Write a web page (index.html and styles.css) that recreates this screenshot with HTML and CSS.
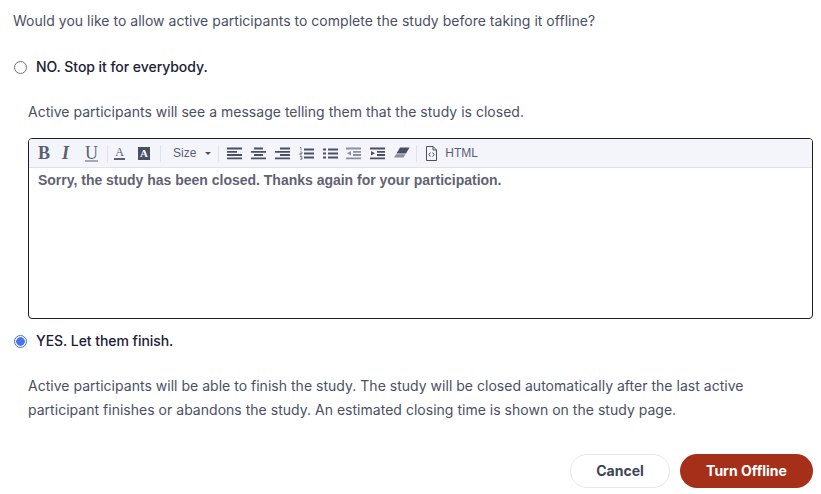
FILE: index.html
```html
<!DOCTYPE html>
<html lang="en">
<head>
    <meta charset="UTF-8">
    <title>Turn study offline</title>
    <link rel="stylesheet" href="styles.css">
</head>
<body>
    <p class="question">Would you like to allow active participants to complete the study before taking it offline?</p>

    <label class="option option-no">
        <input type="radio" name="finish">
        <span>NO. Stop it for everybody.</span>
    </label>
    <p class="note note-no">Active participants will see a message telling them that the study is closed.</p>

    <div class="editor">
        <div class="toolbar">
            <span class="tool tool-b">B</span>
            <span class="tool tool-i">I</span>
            <span class="tool tool-u">U</span>
            <span class="sep sep-a"></span>
            <span class="tool tool-color">A</span>
            <span class="tool tool-bg">A</span>
            <span class="sep sep-b"></span>
            <span class="tool tool-size">Size <i class="caret"></i></span>
            <span class="sep sep-c"></span>
            <svg class="icon" width="16" height="13" viewBox="0 0 16 13"><path d="M0 1.500h15M0 4.800h10M0 8h15M0 11.300h15" /></svg>
            <svg class="icon" width="16" height="13" viewBox="0 0 16 13"><path d="M3 1.500h9M0 4.800h15M3 8h9M0 11.300h15" /></svg>
            <svg class="icon" width="16" height="13" viewBox="0 0 16 13"><path d="M5 1.500h10M0 4.800h15M5 8h10M0 11.300h15" /></svg>
            <svg class="icon" width="16" height="13" viewBox="0 0 16 13"><path d="M5 2.500h10M5 6.500h10M5 10.500h10" /><path class="fine" d="M1 .5h1v3M1 5h2v1.500H1V8h2M1 9.500h2v1.500H1.500M3 11v1.300H1" /></svg>
            <svg class="icon icon-list" width="15" height="13" viewBox="0 0 15 13"><path d="M5 2.500h10M5 6.500h10M5 10.500h10M0 2.500h3M0 6.500h3M0 10.500h3" /></svg>
            <svg class="icon icon-pale" width="16" height="13" viewBox="0 0 16 13"><path d="M0 1.500h15M7 4.800h8M7 8h8M0 11.300h15" /><path class="solid" d="M5 4v4.500L1 6.200z" /></svg>
            <svg class="icon" width="16" height="13" viewBox="0 0 16 13"><path d="M0 1.500h15M7 4.800h8M7 8h8M0 11.300h15" /><path class="solid" d="M1 4v4.500l4-2.300z" /></svg>
            <svg class="icon icon-eraser" width="16" height="12" viewBox="0 0 16 12"><path class="solid" d="M6 .5h9.500L12 6.500H2.500z" /><path class="solid rubber" d="M2 7.300h9.500L9.500 10.500H0z" /></svg>
            <span class="sep sep-d"></span>
            <svg class="icon-file" width="13" height="15" viewBox="0 0 13 15"><path d="M1.500.5h6.500l3.500 3.500v10.500h-10zM8 .5v3.500h3.500M5.500 6.500 3.800 8.500l1.700 2M7.500 6.500l1.700 2-1.700 2" /></svg>
            <span class="tool tool-html">HTML</span>
        </div>
        <div class="editor-text">Sorry, the study has been closed. Thanks again for your participation.</div>
    </div>

    <label class="option option-yes">
        <input type="radio" name="finish" checked>
        <span>YES. Let them finish.</span>
    </label>
    <p class="note note-yes">Active participants will be able to finish the study. The study will be closed automatically after the last active participant finishes or abandons the study. An estimated closing time is shown on the study page.</p>

    <div class="actions">
        <button class="btn btn-cancel">Cancel</button>
        <button class="btn btn-offline">Turn Offline</button>
    </div>
</body>
</html>
```
FILE: styles.css
```css
html {
    box-sizing: border-box;
    font-family: Inter, sans-serif;
}

*,
*:before,
*:after {
    box-sizing: inherit;
}

body {
    margin: 0;
    padding: 0 8px 0 13px;
    color: #4a4f63;
    background-color: white;
    font-size: 14px;
    letter-spacing: .02px;
    overflow: hidden;
}

p {
    margin: 0;
}

.question {
    padding-top: 11px;
    line-height: 20px;
}

.option {
    display: flex;
    align-items: center;
    gap: 9px;
    line-height: 20px;
    color: #1c2033;
    font-weight: 500;
    letter-spacing: -.05px;
}

.option input {
    appearance: none;
    flex: none;
    width: 13px;
    height: 13px;
    margin: 0 0 0 1px;
    border: 1px solid #6f6f76;
    border-radius: 50%;
    background-color: white;
}

.option input:checked {
    border: 1px solid #3f6fe8;
    background: radial-gradient(circle, #4a74ee 0 4px, white 4.600px);
}

.option-no {
    margin-top: 26px;
}

.option-yes {
    margin-top: 12px;
}

.note {
    margin-left: 15px;
    line-height: 24px;
}

.note-no {
    margin-top: 23px;
}

.note-yes {
    margin-top: 23px;
    margin-right: 40px;
}

.editor {
    height: 181px;
    margin: 14px 0 0 15px;
    border: 1px solid #1d1d24;
    border-radius: 4px;
    overflow: hidden;
}

.toolbar {
    display: flex;
    align-items: center;
    height: 29px;
    padding-left: 9px;
    background-color: #f3f5fb;
    border-bottom: 1px solid #dfe2ec;
    letter-spacing: 0;
}

.tool {
    color: #5a5f73;
}

.tool-b,
.tool-i,
.tool-u {
    font-family: "Liberation Serif", serif;
    font-size: 18px;
    font-weight: bold;
}

.tool-b {
    width: 12px;
}

.tool-i {
    width: 10px;
    margin-left: 12px;
    font-style: italic;
}

.tool-u {
    width: 13px;
    margin-left: 13px;
    font-weight: normal;
    text-decoration: underline;
    text-decoration-thickness: 2px;
    text-decoration-color: #a4a8b5;
}

.sep {
    flex: none;
    width: 1px;
    height: 17px;
    background-color: #dfe2ec;
}

.sep-a {
    margin: 0 6px 0 9px;
}

.tool-color {
    width: 11px;
    font-family: "Liberation Serif", serif;
    font-size: 12px;
    line-height: 12px;
    text-align: center;
    border-bottom: 2px solid #5a5f73;
}

.tool-bg {
    width: 12px;
    height: 13px;
    margin-left: 13px;
    background-color: #4a4f63;
    color: white;
    font-family: "Liberation Serif", serif;
    font-size: 11px;
    font-weight: bold;
    line-height: 13px;
    text-align: center;
}

.sep-b {
    margin: 0 12px 0 10px;
}

.tool-size {
    display: flex;
    align-items: center;
    gap: 9px;
    font-family: "Liberation Sans", sans-serif;
    font-size: 12px;
}

.caret {
    border-top: 3px solid #4a4f63;
    border-left: 3px solid transparent;
    border-right: 3px solid transparent;
}

.sep-c {
    margin: 0 8px 0 7px;
}

.icon {
    flex: none;
    margin-right: 8px;
    fill: none;
    stroke: #4a4f63;
    stroke-width: 1.800;
}

.icon .solid {
    fill: #4a4f63;
    stroke: none;
}

.icon .rubber {
    fill: #8a8e9d;
}

.icon .fine {
    stroke-width: .6;
}

.icon-pale {
    opacity: .6;
}

.icon-eraser {
    margin-right: 6px;
}

.sep-d {
    margin-right: 8px;
}

.icon-file {
    flex: none;
    fill: none;
    stroke: #4a4f63;
    stroke-width: 1;
}

.tool-html {
    margin-left: 7px;
    font-family: "Liberation Sans", sans-serif;
    font-size: 12px;
}

.editor-text {
    padding: 3px 9px;
    font-family: "Liberation Sans", sans-serif;
    font-size: 14px;
    font-weight: bold;
    line-height: 18px;
    letter-spacing: -.01px;
    color: #5f6373;
}

.actions {
    display: flex;
    justify-content: flex-end;
    gap: 10px;
    margin-top: 32px;
}

.btn {
    height: 34px;
    padding: 0 0 1px;
    border-radius: 17px;
    font-family: Inter, sans-serif;
    font-size: 14px;
    font-weight: 700;
}

.btn-cancel {
    width: 100px;
    border: 1px solid #e6e8ee;
    background-color: white;
    color: #3d4459;
}

.btn-offline {
    width: 133px;
    border: none;
    background-color: #a52f18;
    color: white;
}
```
